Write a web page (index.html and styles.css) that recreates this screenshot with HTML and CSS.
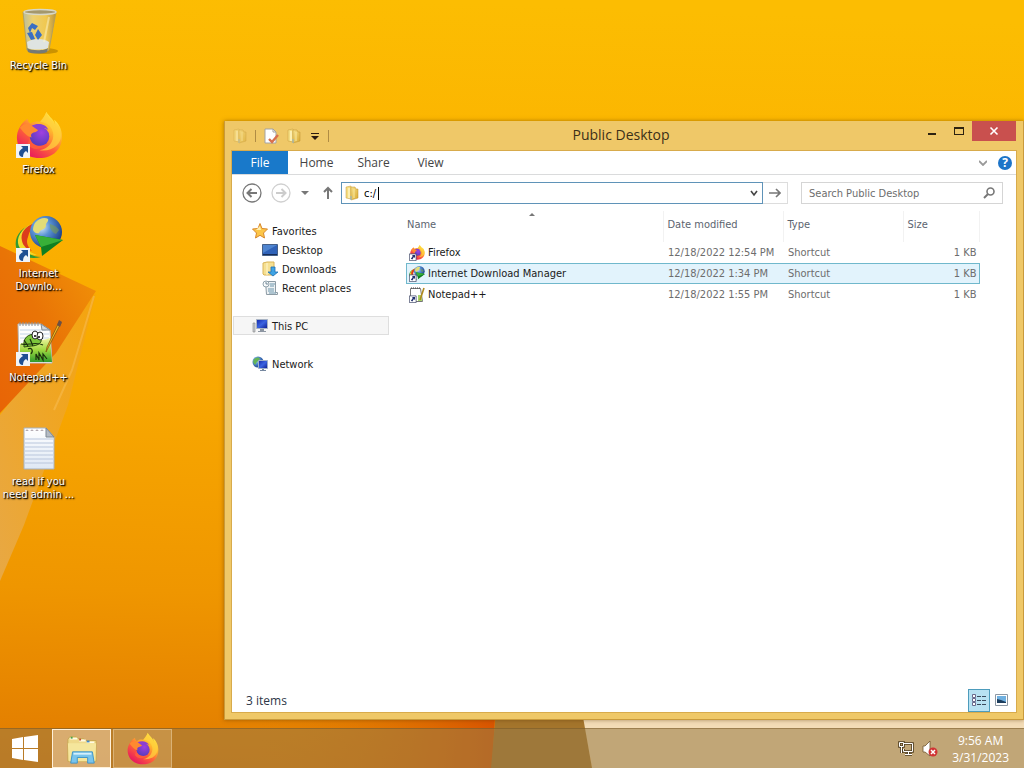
FILE: index.html
```html
<!DOCTYPE html>
<html lang="en">
<head>
    <meta charset="UTF-8">
    <meta name="viewport" content="width=device-width, initial-scale=1.0">
    <title>Public Desktop</title>
    <link rel="stylesheet" href="styles.css">
</head>
<body>

    <!-- Shared icons -->
    <svg class="sprite" aria-hidden="true">
        <defs>
            <linearGradient id="foxBody" x1="0.85" y1="0.1" x2="0.25" y2="0.95">
                <stop offset="0" stop-color="#fff04a"/>
                <stop offset="0.3" stop-color="#ffb52e"/>
                <stop offset="0.6" stop-color="#ff6338"/>
                <stop offset="1" stop-color="#e8195f"/>
            </linearGradient>
            <radialGradient id="foxGlobe" cx="0.6" cy="0.3" r="0.8">
                <stop offset="0" stop-color="#a040e0"/>
                <stop offset="1" stop-color="#4a3cb8"/>
            </radialGradient>
            <radialGradient id="globe" cx="0.35" cy="0.35" r="0.7">
                <stop offset="0" stop-color="#d9ecf8"/>
                <stop offset="0.4" stop-color="#5a93d6"/>
                <stop offset="1" stop-color="#1b3f86"/>
            </radialGradient>
            <linearGradient id="folder" x1="0" y1="0" x2="1" y2="1">
                <stop offset="0" stop-color="#f8e28c"/>
                <stop offset="1" stop-color="#d8a830"/>
            </linearGradient>
            <linearGradient id="screen" x1="0" y1="0" x2="1" y2="1">
                <stop offset="0" stop-color="#1226a8"/>
                <stop offset="0.5" stop-color="#3a63e0"/>
                <stop offset="1" stop-color="#0a1a8c"/>
            </linearGradient>
            <linearGradient id="paper" x1="0" y1="0" x2="0" y2="1">
                <stop offset="0" stop-color="#ffffff"/>
                <stop offset="1" stop-color="#dfe8f4"/>
            </linearGradient>
            <linearGradient id="grass" x1="0" y1="0" x2="0" y2="1">
                <stop offset="0" stop-color="#f2f4a0"/>
                <stop offset="0.5" stop-color="#9ed840"/>
                <stop offset="1" stop-color="#2f9a2c"/>
            </linearGradient>
            <linearGradient id="bin" x1="0" y1="0" x2="1" y2="0">
                <stop offset="0" stop-color="#b9bd9c"/>
                <stop offset="0.3" stop-color="#ecd070"/>
                <stop offset="0.7" stop-color="#f0c850"/>
                <stop offset="1" stop-color="#b89440"/>
            </linearGradient>
        </defs>

        <symbol id="shortcut" viewBox="0 0 14 14">
            <path d="M0 0h14v14H0z" fill="#f0f4f8"/>
            <path d="M5 2h7v7l-2-2c-2 1-3 3-3 6-3 0-4-2-4-4 0-2 2-4 4-5z" fill="#1f4f92"/>
        </symbol>

        <symbol id="listShortcut" viewBox="0 0 16 16">
            <path d="M.5 6.500h9v9h-9z" fill="#fff" stroke="#3c4464"/>
            <path d="M4 8h4v4L6.500 10.700 4.500 14 2.500 13 5 9.300z" fill="#223070"/>
        </symbol>

        <symbol id="firefox" viewBox="0 0 48 48">
            <path d="M31 0c-2 5-4 7-7 10-4-1-7 0-9 2-2-1-3-3-3-5C8 9 2 16 1 24c-1 13 8 23 23 23 14 0 23-9 23-22 0-8-4-14-8-17 0 1 1 3 1 5-1-5-6-8-9-13z" fill="url(#foxBody)"/>
            <path d="M31 0c-2 5-4 7-6 10 8 1 12 6 13 12 1 8-5 16-14 17 13 2 22-6 22-15 0-6-3-11-7-14l1 4C38 9 33 6 31 0z" fill="#ffd23e" opacity="0.75"/>
            <circle cx="24" cy="25" r="10" fill="url(#foxGlobe)"/>
            <path d="M4 16c3-4 8-5 12-3 2 1 6 2 8 3-1 3-3 4-6 5-3 1-3 3-2 5-5-1-8-5-12-10z" fill="#ff8a30"/>
            <path d="M16 14c6-3 14-2 17 4-5-3-9-1-10 1z" fill="#8d3fd2"/>
            <path d="M14 26c1 8 11 11 18 6-4 7-16 8-20 1z" fill="#ff5a3c"/>
        </symbol>

        <symbol id="idm" viewBox="0 0 48 48">
            <path d="M21 8C6 10-1 21 1 31c2 9 14 13 25 10-10 0-17-6-17-13 0-8 5-13 12-20z" fill="#2f9a33"/>
            <path d="M22 6C9 9 2 19 3 27c1 8 9 12 19 12-9-3-13-7-12-13 0-8 5-12 12-20z" fill="#f3dc2c"/>
            <path d="M20 7C10 10 5 17 7 25c1 5 5 8 10 10-5-5-6-9-4-14 1-5 4-10 7-14z" fill="#dc3c1c"/>
            <circle cx="31" cy="16" r="16" fill="url(#globe)"/>
            <path d="M20 7c4-5 10-6 13-4 1 3-3 4-2 7-1 4-6 3-7 7-3 1-5-1-6-3 0-3 1-5 2-7z" fill="#e2dc78"/>
            <path d="M35 8c4 1 7 3 9 6l-3 4c-3-1-7-5-6-10z" fill="#7a9c50" opacity="0.6"/>
            <path d="M20 19l28 5-21 16-1-9z" fill="#0f7f22"/>
            <path d="M20 19l28 5-22 7z" fill="#38b038"/>
        </symbol>

        <symbol id="notepadpp" viewBox="0 0 48 48">
            <path d="M3 4h23l9 6 2 33H4z" fill="#fdfdfd" stroke="#b8bcc0"/>
            <path d="M5 10h26M5 14h29M5 18h29" stroke="#c4d4e6"/>
            <path d="M5 24c9-4 20-2 30-6l2 24H5z" fill="url(#grass)"/>
            <path d="M9 22c1-8 12-10 16-5 4 5-2 9-9 9l-7 1z" fill="#7cc63c" stroke="#2c4c10"/>
            <path d="M6 24c6 2 14-3 22 1M9 20l4 6M15 19l3 7M13 29c3-2 6 1 3 5M21 40v-6l3 6v-7l4 7v-6l4 5" fill="none" stroke="#1c300c" stroke-width="1.2"/>
            <ellipse cx="20" cy="15" rx="3" ry="4" fill="#fff" stroke="#222"/>
            <ellipse cx="25" cy="16" rx="3" ry="4" fill="#fff" stroke="#222"/>
            <circle cx="20" cy="16" r="1"/><circle cx="24" cy="17" r="1"/>
            <path d="M5 2v4M8 2v4M11 2v4M14 2v4M17 2v4M20 2v4M23 2v4" stroke="#8a8f96"/>
            <path d="M26 4l9 6h-8z" fill="#cfd6de" stroke="#7f8994"/>
            <path d="M46 3L33 28l-2 4 1-5L44 2z" fill="#f2b624" stroke="#7e5a14" stroke-width="0.8"/>
            <path d="M44 0l3 2-2 5-3-2z" fill="#6a5046"/>
        </symbol>

        <symbol id="folderIcon" viewBox="0 0 16 16">
            <path d="M2 2l5-1v13l-5-1z" fill="#f4dc80" stroke="#c89c3c" stroke-width="0.5"/>
            <path d="M7 2h4l1 2h2v9l-7 2z" fill="url(#folder)" stroke="#bf9230" stroke-width="0.5"/>
            <path d="M5 3v10" stroke="#fff4c0" stroke-width="1.5"/>
            <path d="M10 4v9" stroke="#f9e9a0"/>
            <path d="M7 11v4" stroke="#8eb6d0"/>
        </symbol>
    </svg>

    <!-- Wallpaper -->
    <svg class="wallpaper" viewBox="0 0 1024 768" preserveAspectRatio="none" aria-hidden="true">
        <defs>
            <linearGradient id="sky" x1="0.4" y1="0" x2="0.35" y2="1">
                <stop offset="0" stop-color="#fcbd02"/>
                <stop offset="0.3" stop-color="#fbb000"/>
                <stop offset="0.52" stop-color="#f8a800"/>
                <stop offset="0.78" stop-color="#ef9600"/>
                <stop offset="1" stop-color="#e27c00"/>
            </linearGradient>
            <linearGradient id="fold" x1="1" y1="0" x2="0" y2="1">
                <stop offset="0" stop-color="#f29608"/>
                <stop offset="0.5" stop-color="#e97406"/>
                <stop offset="1" stop-color="#e86406"/>
            </linearGradient>
            <linearGradient id="flap" x1="1" y1="0" x2="0" y2="1">
                <stop offset="0" stop-color="#f5a40c"/>
                <stop offset="1" stop-color="#e8a844"/>
            </linearGradient>
            <linearGradient id="ember" x1="0" y1="0" x2="1" y2="0">
                <stop offset="0" stop-color="#e07c00" stop-opacity="0"/>
                <stop offset="1" stop-color="#d85400"/>
            </linearGradient>
        </defs>
        <rect width="1024" height="768" fill="url(#sky)"/>
        <path d="M96 293L0 415v166l24-56 44-120z" fill="url(#flap)"/>
        <path d="M94 296L72 370 54 410" fill="none" stroke="#f6bb50" stroke-width="2" opacity="0.6"/>
        <path d="M0 246l96 45-40 62L0 413z" fill="url(#fold)"/>
        <path d="M260 700h236l-4 68H260z" fill="url(#ember)"/>
        <path d="M497 700h84l11 68H491z" fill="#a4752c"/>
        <path d="M580 700h444v68H592z" fill="#f3dcb6"/>
    </svg>

    <div class="desktop">
        <!-- Desktop shortcuts -->
        <nav class="desktop-icons">
            <a class="desktop-icon" href="#">
                <svg viewBox="0 0 48 48">
                    <ellipse cx="29" cy="43" rx="14" ry="3" fill="#9a6c00" opacity="0.5"/>
                    <path d="M8 4l4 38c3 3 19 3 22 0l7-38z" fill="url(#bin)" stroke="#a89a68" stroke-width="0.8"/>
                    <path d="M12 34c6-4 17-4 22 0l-1 6c-4 2-16 2-20 0z" fill="#dfe4e2"/>
                    <path d="M12 40c4 3 18 3 21 0l-1 4c-4 2-15 2-19 0z" fill="#767a74"/>
                    <ellipse cx="25" cy="4" rx="16" ry="2.500" fill="#a4986c" stroke="#d8d8c8" stroke-width="1.4"/>
                    <path d="M13 20l4-5 6 3-3 4-3-2-2 5zM23 21l4 6-4 5-3-5zM12 25l5-1 3 7-4 1z" fill="#3a6fc4"/>
                    <path d="M34 9l-5 25" stroke="#fff6c8" stroke-width="2" opacity="0.5"/>
                </svg>
                <span>Recycle Bin</span>
            </a>
            <a class="desktop-icon" href="#">
                <svg viewBox="0 0 48 48">
                    <use href="#firefox" x="1" width="47" height="47"/>
                    <use href="#shortcut" x="1" y="32" width="14" height="14"/>
                </svg>
                <span>Firefox</span>
            </a>
            <a class="desktop-icon" href="#">
                <svg viewBox="0 0 48 48">
                    <use href="#idm" width="48" height="48"/>
                    <use href="#shortcut" x="1" y="32" width="14" height="14"/>
                </svg>
                <span>Internet Downlo...</span>
            </a>
            <a class="desktop-icon" href="#">
                <svg viewBox="0 0 48 48">
                    <use href="#notepadpp" width="48" height="48"/>
                    <use href="#shortcut" x="1" y="32" width="14" height="14"/>
                </svg>
                <span>Notepad++</span>
            </a>
            <a class="desktop-icon" href="#">
                <svg viewBox="0 0 48 48">
                    <path d="M9 4h22l8 9v32H9z" fill="url(#paper)" stroke="#a8b2be"/>
                    <path d="M31 4l8 9h-8z" fill="#b5bcc4" stroke="#7f8994"/>
                    <path d="M10 15h28M10 19h28M10 23h28M10 27h28M10 31h28M10 35h28M10 39h28" stroke="#b9c6dc"/>
                    <path d="M11 7a1 1 0 1 1 2 0M16 7a1 1 0 1 1 2 0M21 7a1 1 0 1 1 2 0M26 7a1 1 0 1 1 2 0" fill="none" stroke="#9d939c"/>
                </svg>
                <span>read if you need admin ...</span>
            </a>
        </nav>

        <!-- Explorer window -->
        <main class="window">
            <header class="title-bar">
                <div class="quick-access">
                    <svg class="faded" viewBox="0 0 16 16"><use href="#folderIcon"/></svg>
                    <i></i>
                    <button aria-label="Properties">
                        <svg viewBox="0 0 16 16">
                            <path d="M2 1h8l3 3v11H2z" fill="#fff" stroke="#a3a3a3"/>
                            <path d="M10 1v3h3" fill="none" stroke="#a3a3a3"/>
                            <path d="M6 11l3 3 6-7" fill="none" stroke="#d8704e" stroke-width="2.4"/>
                        </svg>
                    </button>
                    <button aria-label="New folder"><svg viewBox="0 0 16 16"><use href="#folderIcon"/></svg></button>
                    <button class="customize" aria-label="Customize toolbar">
                        <svg viewBox="0 0 8 8"><path d="M0 1.500h8" stroke="#2b1a10"/><path d="M0 4h8L4 8z" fill="#2b1a10"/></svg>
                    </button>
                    <i></i>
                </div>
                <h1>Public Desktop</h1>
                <div class="window-buttons">
                    <button aria-label="Minimize"><svg viewBox="0 0 10 10"><path d="M1 8h8" stroke="#2d2210" stroke-width="2"/></svg></button>
                    <button aria-label="Maximize"><svg viewBox="0 0 10 10"><path d="M0 8.500h10M.5 1v8M9.500 1v8" stroke="#2d2210" fill="none"/><path d="M0 2h10" stroke="#2d2210" stroke-width="2"/></svg></button>
                    <button class="close" aria-label="Close"><svg viewBox="0 0 10 10"><path d="M1.500 1.500l7 7M8.500 1.500l-7 7" stroke="#fff" stroke-width="1.600"/></svg></button>
                </div>
            </header>

            <div class="window-content">
                <div class="ribbon">
                    <button class="file-tab">File</button>
                    <button>Home</button>
                    <button>Share</button>
                    <button>View</button>
                    <div class="ribbon-right">
                        <button aria-label="Expand the Ribbon"><svg viewBox="0 0 8 6"><path d="M0 1l4 4 4-4" fill="none" stroke="#999" stroke-width="1.8"/></svg></button>
                        <button class="help" aria-label="Help">?</button>
                    </div>
                </div>

                <div class="address-row">
                    <div class="history">
                        <button aria-label="Back"><svg viewBox="0 0 20 20"><circle cx="10" cy="10" r="9" fill="none" stroke="#777" stroke-width="1.3"/><path d="M15 10H6M9.500 6L5.500 10l4 4" fill="none" stroke="#777" stroke-width="2"/></svg></button>
                        <button aria-label="Forward"><svg viewBox="0 0 20 20"><circle cx="10" cy="10" r="9" fill="none" stroke="#d0d0d0" stroke-width="1.3"/><path d="M5 10h9M10.500 6l4 4-4 4" fill="none" stroke="#ccc" stroke-width="2"/></svg></button>
                        <button class="recent" aria-label="Recent locations"><svg viewBox="0 0 8 8"><path d="M0 2h8L4 6z" fill="#777"/></svg></button>
                        <button class="up" aria-label="Up"><svg viewBox="0 0 12 14"><path d="M6 13V2M2 6l4-4 4 4" fill="none" stroke="#777" stroke-width="2"/></svg></button>
                    </div>
                    <div class="address-group">
                        <div class="address">
                            <svg viewBox="0 0 16 16"><use href="#folderIcon"/></svg>
                            <input type="text" id="address" value="c:/" aria-label="Address">
                            <span class="caret"></span>
                            <button aria-label="Previous locations"><svg viewBox="0 0 8 8"><path d="M1 2l3 4 3-4" fill="none" stroke="#444" stroke-width="1.6"/></svg></button>
                        </div>
                        <button class="go" aria-label="Go"><svg viewBox="0 0 12 12"><path d="M0 6h10M7 2l4 4-4 4" fill="none" stroke="#777" stroke-width="1.6"/></svg></button>
                    </div>
                    <div class="search">
                        <input type="text" placeholder="Search Public Desktop" aria-label="Search Public Desktop">
                        <button aria-label="Search"><svg viewBox="0 0 12 12"><circle cx="7.500" cy="4.500" r="3.500" fill="none" stroke="#777" stroke-width="1.600"/><path d="M5 7l-4 4" stroke="#777" stroke-width="2"/></svg></button>
                    </div>
                </div>

                <div class="panes">
                    <nav class="tree">
                        <a href="#">
                            <svg viewBox="0 0 16 16"><path d="M8 .5l2 5 5.500.500-4 4 1 5L8 12.300 3.500 15l1-5-4-4L6 5.500z" fill="#fcc648" stroke="#d8872c"/><path d="M8 3l1 4-5 0z" fill="#fff0b0"/></svg>
                            Favorites
                        </a>
                        <a class="child" href="#">
                            <svg viewBox="0 0 16 16"><path d="M.5 2.500h15v11H.5z" fill="#2f62b8" stroke="#456088"/><path d="M1 3h14L1 11z" fill="#4f85d0"/><path d="M1 12h14v1H1z" fill="#152c58"/></svg>
                            Desktop
                        </a>
                        <a class="child" href="#">
                            <svg viewBox="0 0 16 16"><path d="M1 2l4-1h7v13H2l-1-1z" fill="#f6e092" stroke="#d9b458"/><path d="M5 2v12" stroke="#fff7d0"/><path d="M9 6h4v5h3l-5 4-5-4h3z" fill="#3fa4e4" stroke="#1e70b4" stroke-width="0.8"/></svg>
                            Downloads
                        </a>
                        <a class="child" href="#">
                            <svg viewBox="0 0 16 16"><path d="M3.500 1.500h10v11h2v2h-11z" fill="#eef2f4" stroke="#8d9ba4"/><path d="M8 4h5M8 6h4M6 9h6M6 11h6M7 13h7" stroke="#6d96ac"/><circle cx="4" cy="4" r="3" fill="#f8fbfc" stroke="#91a2ac"/><path d="M4 2v2h2" fill="none" stroke="#546f80" stroke-width="0.8"/></svg>
                            Recent places
                        </a>
                        <a class="group selected" href="#">
                            <svg viewBox="0 0 16 16"><path d="M4.500 1.500h11v9h-11z" fill="url(#screen)" stroke="#a9b4c4"/><path d="M8 11h4v2H8zM6 13h8v1H6z" fill="#8d96a2"/><path d="M1 5h2v9H1z" fill="#c8ccd0" stroke="#888" stroke-width="0.6"/></svg>
                            This PC
                        </a>
                        <a class="group" href="#">
                            <svg viewBox="0 0 16 16"><circle cx="6" cy="6" r="5.500" fill="url(#globe)"/><path d="M2 3c3-2 5-2 6 0L5 6 3 9 1 6z" fill="#64b458"/><path d="M6.500 4.500h9v8h-9z" fill="url(#screen)" stroke="#9fb0c8"/><path d="M10 13h2v1h2v1H8v-1h2z" fill="#7688a0"/></svg>
                            Network
                        </a>
                    </nav>

                    <section class="files">
                        <table>
                            <colgroup>
                                <col class="col-name"><col class="col-date"><col class="col-type"><col class="col-size">
                            </colgroup>
                            <thead>
                                <tr>
                                    <th class="sorted">Name
                                        <svg viewBox="0 0 6 4"><path d="M0 4l3-3 3 3z" fill="#777"/></svg>
                                    </th>
                                    <th>Date modified</th>
                                    <th>Type</th>
                                    <th>Size</th>
                                </tr>
                            </thead>
                            <tbody>
                                <tr>
                                    <td><svg viewBox="0 0 16 16"><use href="#firefox" x="1" width="15" height="15"/><use href="#listShortcut" y="4" width="12" height="12"/></svg>Firefox</td>
                                    <td>12/18/2022 12:54 PM</td>
                                    <td>Shortcut</td>
                                    <td>1 KB</td>
                                </tr>
                                <tr class="selected">
                                    <td><svg viewBox="0 0 16 16"><use href="#idm"/><use href="#listShortcut" y="4" width="12" height="12"/></svg>Internet Download Manager</td>
                                    <td>12/18/2022 1:34 PM</td>
                                    <td>Shortcut</td>
                                    <td>1 KB</td>
                                </tr>
                                <tr>
                                    <td>
                                        <svg viewBox="0 0 16 16">
                                            <path d="M1.500 1.500h10l2 13h-12z" fill="#fff" stroke="#777"/>
                                            <path d="M2 1h9" stroke="#444" stroke-dasharray="1 1"/>
                                            <path d="M9 8h4v6H9z" fill="#a8d468"/>
                                            <path d="M15 1l-4 12" stroke="#b08a20" stroke-width="1.6"/>
                                            <use href="#listShortcut" y="4" width="12" height="12"/>
                                        </svg>Notepad++
                                    </td>
                                    <td>12/18/2022 1:55 PM</td>
                                    <td>Shortcut</td>
                                    <td>1 KB</td>
                                </tr>
                            </tbody>
                        </table>
                    </section>
                </div>

                <footer class="status-bar">
                    <span>3 items</span>
                    <div class="view-buttons">
                        <button class="active" aria-label="Details"><svg viewBox="0 0 16 14"><path d="M1.500 1.500h3v3h-3zM1.500 5.500h3v3h-3zM1.500 9.500h3v3h-3z" fill="#fff" stroke="#6a6a8c"/><path d="M6 3.500h4M11 3.500h4M6 7.500h4M11 7.500h4M6 11.500h4M11 11.500h4" stroke="#3a4a5c"/></svg></button>
                        <button aria-label="Large icons"><svg viewBox="0 0 16 14"><path d="M2.500 1.500h12v11h-12z" fill="#fff" stroke="#8d98a4"/><path d="M4 3h9v7H4z" fill="#6fb0e0"/><path d="M4 6l4 1 5 2v1H4z" fill="#1c3c5c"/></svg></button>
                    </div>
                </footer>
            </div>
        </main>
    </div>

    <!-- Taskbar -->
    <footer class="taskbar">
        <button class="start" aria-label="Start">
            <svg viewBox="0 0 28 28"><path d="M1 4l11-2v11H1zM13 2l14-2v13H13zM1 14h11v11L1 23zM13 14h14v13l-14-2z" fill="#fff"/></svg>
        </button>
        <button class="task active" aria-label="File Explorer">
            <svg viewBox="0 0 34 32">
                <path d="M2 6l2-3h7l2 2h6l1 2h12v22H2z" fill="#efd98a" stroke="#c6a652"/>
                <path d="M4 5h8M14 7h7M22 9h8" stroke="#fffbe4" stroke-width="2"/>
                <path d="M5 4h2" stroke="#4ba04c" stroke-width="2"/><path d="M14 6h2" stroke="#c64c34" stroke-width="2"/><path d="M22 8h3" stroke="#4488c4" stroke-width="2"/>
                <path d="M2 10h30l-1 19H3z" fill="#f5e69c"/>
                <path d="M7 19h21l2 12h-7v-6H12v6H5z" fill="#79c4ec" stroke="#3c93c8"/>
                <path d="M8 21h19" stroke="#d4f0fc" stroke-width="2"/>
            </svg>
        </button>
        <button class="task" aria-label="Firefox">
            <svg viewBox="0 0 32 32"><use href="#firefox"/></svg>
        </button>
        <div class="tray">
            <button aria-label="Network">
                <svg viewBox="0 0 16 16"><path d="M6 2.500h8.500v8H5.500V8M7 13.500h7M10.500 11v2M1.500 1.500h4v4h-4zM3.500 6v6" fill="none" stroke="#4d3c20" stroke-width="2.600"/><path d="M6 2.500h8.500v8H5.500V8M7 13.500h7M10.500 11v2M1.500 1.500h4v4h-4zM3.500 6v6" fill="none" stroke="#fff"/></svg>
            </button>
            <button aria-label="Volume muted">
                <svg viewBox="0 0 16 16"><path d="M1 5h2l5-5v15l-5-4H1z" fill="#fff" stroke="#6e5630" stroke-width="0.8"/><circle cx="11" cy="11" r="4.500" fill="#d03434"/><path d="M9 9l4 4M13 9l-4 4" stroke="#fff" stroke-width="1.500"/></svg>
            </button>
            <div class="clock">
                <span>9:56 AM</span>
                <span>3/31/2023</span>
            </div>
        </div>
    </footer>

</body>
</html>
```

FILE: styles.css
```css
* {
    box-sizing: border-box;
}

body {
    margin: 0;
    height: 100vh;
    display: flex;
    flex-direction: column;
    overflow: hidden;
    font-family: "DejaVu Sans Condensed", "DejaVu Sans", sans-serif;
    font-size: 11px;
    color: #1a1a1a;
}

button {
    display: flex;
    align-items: center;
    justify-content: center;
    padding: 0;
    border: none;
    background: none;
    font: inherit;
    color: inherit;
}

a {
    color: inherit;
    text-decoration: none;
}

svg {
    display: block;
    flex: none;
}

.sprite {
    position: absolute;
    width: 0;
    height: 0;
}

.wallpaper {
    position: absolute;
    top: 0;
    left: 0;
    width: 100%;
    height: 100%;
    z-index: -1;
}

.desktop {
    flex: 1;
    position: relative;
}

/* Desktop shortcuts */
.desktop-icons {
    width: 77px;
    padding-top: 8px;
    display: flex;
    flex-direction: column;
}

.desktop-icon {
    height: 104px;
    display: flex;
    flex-direction: column;
    align-items: center;
    gap: 3px;
    color: #fff;
    line-height: 13px;
    text-align: center;
    text-shadow: 1px 1px 2px #000, 1px 1px 1px #000;
}

.desktop-icon svg {
    width: 48px;
    height: 48px;
}

/* Explorer window */
.window {
    position: absolute;
    top: 121px;
    left: 224px;
    right: 0;
    bottom: 8px;
    display: flex;
    flex-direction: column;
    padding: 0 7px 7px;
    background-color: #efc868;
    border: 1px solid #c99a3c;
    border-top: none;
    box-shadow: 0 0 4px rgba(90, 50, 0, 0.5);
}

.title-bar {
    height: 30px;
    display: grid;
    grid-template-columns: 1fr auto 1fr;
    align-items: center;
    font-family: "Open Sans", sans-serif;
}

.title-bar h1 {
    margin: 0;
    padding-right: 6px;
    font-size: 14px;
    font-weight: 400;
    line-height: 28px;
    align-self: start;
    color: #3c3018;
}

.quick-access {
    display: flex;
    align-items: center;
    gap: 7px;
}

.quick-access svg {
    width: 16px;
    height: 16px;
}

.quick-access .faded {
    opacity: 0.6;
}

.quick-access i {
    width: 1px;
    height: 12px;
    background-color: #b08c44;
}

.quick-access .customize {
    width: 12px;
}

.quick-access .customize svg {
    width: 8px;
    height: 8px;
}

.window-buttons {
    display: flex;
    justify-content: flex-end;
    align-self: start;
}

.window-buttons button {
    width: 27px;
    height: 20px;
}

.window-buttons svg {
    width: 10px;
    height: 10px;
}

.window-buttons .close {
    width: 44px;
    background-color: #c9504e;
}

.window-content {
    flex: 1;
    display: flex;
    flex-direction: column;
    background-color: #fff;
    outline: 1px solid #d8ab4c;
}

/* Ribbon tabs */
.ribbon {
    height: 24px;
    display: flex;
    border-bottom: 1px solid #dadbdc;
    font-family: "Open Sans", sans-serif;
    font-size: 12px;
    color: #444;
}

.ribbon > button {
    width: 57px;
}

.ribbon .file-tab {
    width: 56px;
    background-color: #1979ca;
    color: #fff;
}

.ribbon-right {
    margin-left: auto;
    padding-right: 4px;
    display: flex;
    align-items: center;
    gap: 11px;
}

.ribbon-right svg {
    width: 8px;
    height: 6px;
}

.ribbon-right .help {
    width: 14px;
    height: 14px;
    border-radius: 50%;
    background-color: #1c74c8;
    color: #fff;
    font-weight: 700;
}

/* Navigation and address */
.address-row {
    height: 36px;
    display: flex;
    align-items: center;
    gap: 13px;
    padding: 0 13px 0 10px;
}

.history {
    display: flex;
    align-items: center;
    gap: 9px;
}

.history svg {
    width: 20px;
    height: 20px;
}

.history .recent {
    width: 10px;
}

.history .recent svg {
    width: 8px;
    height: 8px;
}

.history .up {
    width: 17px;
}

.history .up svg {
    width: 12px;
    height: 14px;
}

.address-group {
    flex: 1;
    display: flex;
    margin-left: -8px;
}

.address {
    flex: 1;
    position: relative;
    height: 22px;
    display: flex;
    align-items: center;
    padding: 0 4px 0 2px;
    border: 1px solid #5f93b8;
}

.address > svg {
    width: 16px;
    height: 16px;
}

.address input {
    flex: 1;
    padding: 0 4px;
    border: none;
    outline: none;
    font: inherit;
    color: #000;
}

/* text cursor over the address box */
.caret {
    position: absolute;
    top: 4px;
    left: 36px;
    width: 1px;
    height: 13px;
    background-color: #000;
}

.address button svg {
    width: 8px;
    height: 8px;
}

.go {
    width: 25px;
    border: 1px solid #ddd;
    border-left: none;
}

.go svg,
.search svg {
    width: 12px;
    height: 12px;
}

.search {
    width: 202px;
    height: 22px;
    display: flex;
    align-items: center;
    padding: 0 7px;
    border: 1px solid #d5d5d5;
}

.search input {
    flex: 1;
    min-width: 0;
    padding: 0;
    border: none;
    outline: none;
    font: inherit;
}

.search input::placeholder {
    color: #6d6d6d;
}

/* Folder tree */
.panes {
    flex: 1;
    display: flex;
    gap: 17px;
}

.tree {
    width: 157px;
    padding: 10px 0 0 1px;
}

.tree a {
    height: 19px;
    display: flex;
    align-items: center;
    gap: 4px;
    padding: 1px 0 0 18px;
    border: 1px solid transparent;
}

.tree .child {
    padding-left: 28px;
}

.tree .group {
    margin-top: 19px;
}

.tree .selected {
    background-color: #f6f6f6;
    border-color: #dedede;
}

.tree svg {
    width: 16px;
    height: 16px;
}

/* File list */
.files {
    flex: 1;
}

table {
    width: 574px;
    table-layout: fixed;
    border-collapse: collapse;
    color: #6d6d6d;
}

.col-name {
    width: 257px;
}

.col-date,
.col-type {
    width: 120px;
}

th {
    height: 31px;
    position: relative;
    padding: 0 0 5px 4px;
    border-right: 1px solid #f2f2f2;
    font-weight: 400;
    text-align: left;
    color: #5c6470;
}

th:first-child {
    padding-left: 1px;
}

.sorted svg {
    position: absolute;
    top: 1px;
    left: 48%;
    width: 6px;
    height: 4px;
}

td {
    height: 21px;
    padding: 0 3px 0 5px;
}

td:first-child {
    display: flex;
    align-items: center;
    gap: 3px;
    padding-left: 3px;
    color: #1a1a1a;
}

td:last-child {
    text-align: right;
}

td svg {
    width: 16px;
    height: 16px;
}

tbody .selected {
    background-color: #e2f3fc;
    outline: 1px solid #70b8cc;
    outline-offset: -1px;
}

/* Status bar */
.status-bar {
    height: 24px;
    display: flex;
    align-items: center;
    justify-content: space-between;
    padding-left: 14px;
    font-family: "Open Sans", sans-serif;
    font-size: 12px;
    color: #2d3748;
}

.view-buttons {
    display: flex;
    padding-right: 4px;
}

.view-buttons button {
    width: 22px;
    height: 23px;
}

.view-buttons svg {
    width: 16px;
    height: 14px;
}

.view-buttons .active {
    background-color: #b8e2f2;
    border: 1px solid #4d9cbc;
}

/* Taskbar */
.taskbar {
    height: 40px;
    display: flex;
    gap: 2px;
    background-color: rgba(153, 123, 70, 0.56);
    border-top: 1px solid rgba(110, 80, 30, 0.45);
    font-family: "Open Sans", sans-serif;
    font-size: 12px;
    color: #fff;
}

.start {
    width: 50px;
}

.start svg {
    width: 28px;
    height: 28px;
}

.task {
    width: 59px;
    border: 1px solid rgba(230, 200, 150, 0.6);
    background-color: rgba(255, 230, 190, 0.2);
}

.task svg {
    width: 32px;
    height: 32px;
}

.task.active {
    background-color: rgba(255, 230, 200, 0.45);
    border-color: #fff0d8;
}

.tray {
    margin-left: auto;
    padding-right: 15px;
    display: flex;
    align-items: center;
    gap: 8px;
}

.tray svg {
    width: 16px;
    height: 16px;
}

.clock {
    margin-left: 6px;
    display: flex;
    flex-direction: column;
    align-items: center;
    line-height: 17px;
}
```
